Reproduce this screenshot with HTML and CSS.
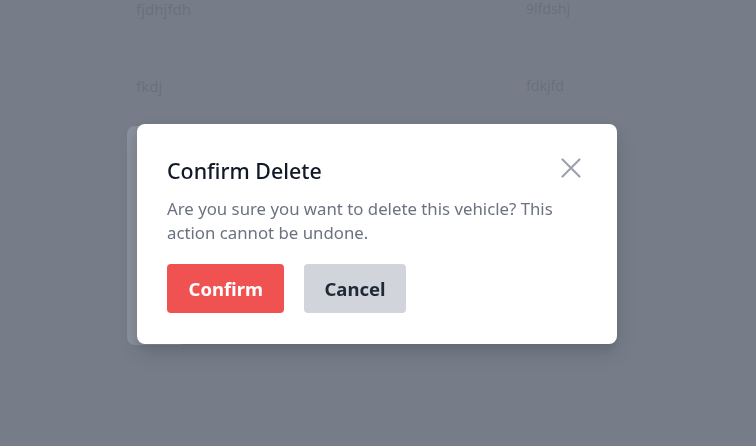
FILE: index.html
```html
<!DOCTYPE html>
<html lang="en">
<head>
<meta charset="utf-8">
<title>Confirm Delete</title>
<link rel="stylesheet" href="styles.css">
</head>
<body>
<main class="page">
  <div class="rows">
    <div class="row"><span class="cell name">fjdhjfdh</span><span class="cell code">9lfdshj</span></div>
    <div class="row"><span class="cell name">fkdj</span><span class="cell code">fdkjfd</span></div>
  </div>
</main>
<div class="overlay">
  <div class="modal-wrap">
    <div class="under-card"></div>
    <section class="modal" role="dialog" aria-labelledby="dlg-title">
      <h2 id="dlg-title" class="modal-title">Confirm Delete</h2>
      <p class="modal-text">Are you sure you want to delete this vehicle? This action cannot be undone.</p>
      <div class="actions">
        <button class="btn btn-confirm">Confirm</button>
        <button class="btn btn-cancel">Cancel</button>
      </div>
      <button class="close" aria-label="Close">
        <svg width="20" height="20" viewBox="0 0 20 20" fill="none" stroke="#9ca3af" stroke-width="2.2" stroke-linecap="round"><path d="M1.5 1.5L18.5 18.5M18.5 1.5L1.5 18.5"/></svg>
      </button>
    </section>
  </div>
</div>
</body>
</html>
```
FILE: styles.css
```css
html, body {
  margin: 0;
  padding: 0;
  height: 100%;
}
body {
  font-family: "Noto Sans", "Open Sans", sans-serif;
  background: #ffffff;
  overflow: hidden;
}
.page {
  padding-left: 136px;
}
.rows {
  display: flex;
  flex-direction: column;
}
.row {
  display: grid;
  grid-template-columns: 390px 1fr;
  height: 77px;
  font-size: 15px;
  line-height: 20px;
  color: #4b5563;
}
.row:first-child {
  margin-top: -1px;
}
.code {
  font-size: 14px;
}
.overlay {
  position: fixed;
  inset: 0;
  background: rgba(107, 114, 128, 0.925);
  display: flex;
  justify-content: center;
  align-items: flex-start;
  padding-top: 124px;
  padding-right: 2px;
}
.modal-wrap {
  position: relative;
}
.under-card {
  position: absolute;
  left: -10px;
  top: 2px;
  bottom: -1px;
  width: 60px;
  background: #8a909c;
  border-radius: 8px;
}
.modal {
  position: relative;
  width: 480px;
  height: 220px;
  box-sizing: border-box;
  padding: 33px 30px 0 30px;
  background: #ffffff;
  border-radius: 8px;
  box-shadow: 0 10px 20px rgba(0, 0, 0, 0.12), 0 4px 8px rgba(0, 0, 0, 0.08);
}
.modal-title {
  margin: 0;
  font-size: 21.4px;
  line-height: 28px;
  font-weight: 500;
  color: #111827;
}
.modal-text {
  margin: 12px 0 0 0;
  font-size: 16.8px;
  line-height: 24px;
  color: #6b7280;
}
.actions {
  display: flex;
  gap: 20px;
  margin-top: 19px;
}
.btn {
  height: 49px;
  padding: 0 20px;
  border: none;
  border-radius: 4px;
  font-family: inherit;
  font-size: 18.5px;
  font-weight: 700;
  cursor: pointer;
}
.btn-confirm {
  padding: 0 21.5px;
  background: #f05252;
  color: #ffffff;
}
.btn-cancel {
  background: #d1d5db;
  color: #1f2937;
}
.close {
  position: absolute;
  top: 34px;
  right: 36px;
  width: 20px;
  height: 20px;
  padding: 0;
  border: none;
  background: none;
  display: flex;
}
```
